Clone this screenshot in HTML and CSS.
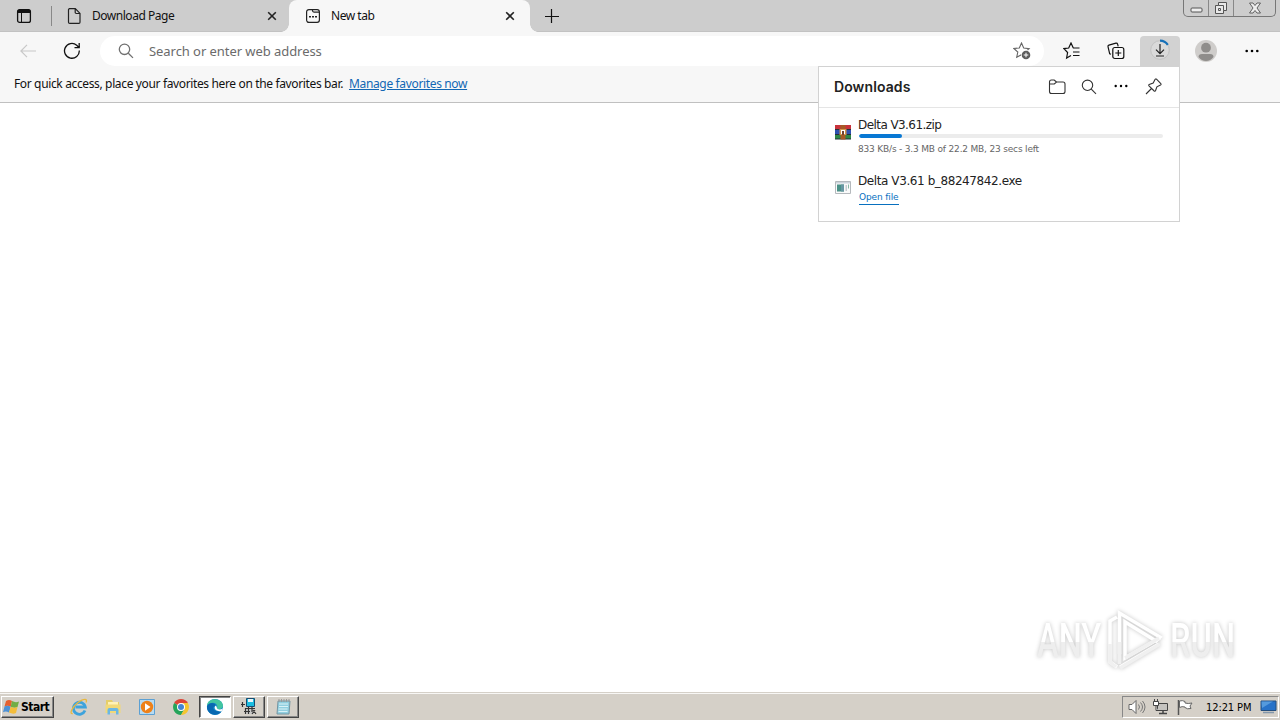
FILE: index.html
```html
<!DOCTYPE html>
<html lang="en">
<head>
  <meta charset="UTF-8" />
  <title>New tab</title>
  <meta name="viewport" content="width=device-width, initial-scale=1" />
  <link rel="stylesheet" href="styles.css">
</head>
<body>
  <header class="tabbar">
    <svg class="tab-actions" width="16" height="16" viewBox="0 0 16 16"><rect x="1.6" y="1.6" width="12.8" height="12.8" rx="2" fill="none" stroke="#111" stroke-width="1.3"/><path d="M1.5 5V3.5a2 2 0 0 1 2-2h9a2 2 0 0 1 2 2V5z" fill="#111"/><path d="M5.5 5v9" stroke="#111"/></svg>
    <span class="tab-divider"></span>
    <div class="tab">
      <svg class="favicon" width="16" height="16" viewBox="0 0 16 16"><path d="M3 .7h6.3L14 5.4v8.8q0 1.1-1.1 1.1H3.8q-1.3 0-1.3-1.1V1.7Q2.5.7 3.5.7M9.2.9v3.4q0 1.2 1.2 1.2h3.4" fill="none" stroke="#222" stroke-width="1.2"/></svg>
      <span class="tab-title">Download Page</span>
      <svg class="tab-close" width="10" height="10" viewBox="0 0 10 10"><path d="M1.2 1.2l7.6 7.6M8.8 1.2L1.2 8.8" stroke="#222" stroke-width="1.6"/></svg>
    </div>
    <div class="tab active">
      <svg class="favicon" width="16" height="16" viewBox="0 0 16 16"><rect x="1.600" y="1.600" width="12.800" height="12.800" rx="2.300" fill="none" stroke="#222" stroke-width="1.200"/><path d="M7.500 1.600v1q0 1.500 1.500 1.500h5.200" fill="none" stroke="#222" stroke-width="1.200"/><path d="M4 8h2v1.600H4zM7 8h2v1.600H7zM10 8h2v1.600h-2z" fill="#222"/></svg>
      <span class="tab-title">New tab</span>
      <svg class="tab-close" width="10" height="10" viewBox="0 0 10 10"><path d="M1.2 1.2l7.6 7.6M8.8 1.2L1.2 8.8" stroke="#222" stroke-width="1.6"/></svg>
    </div>
    <svg class="new-tab" width="14" height="14" viewBox="0 0 14 14"><path d="M6.500 0v14M0 7.500h14" stroke="#111" stroke-width="1.200"/></svg>
    <div class="window-buttons">
      <span class="wb"><svg width="13" height="6" viewBox="0 0 13 6"><rect x="1" y="1" width="11" height="4" rx="1" fill="#eee" stroke="#555"/></svg></span>
      <span class="wb"><svg width="14" height="14" viewBox="0 0 14 14"><path d="M4.500 1.500h8v8h-3v3h-8v-8h3z" fill="#e8e8e8" stroke="#555"/><path d="M4.500 4.500h5v5M4.500 7.500h2v2h-2z" fill="none" stroke="#555"/></svg></span>
      <span class="wb wide"><svg width="14" height="12" viewBox="0 0 14 12"><path d="M1.500 1h3.500l2 2.500L9 1h3.500L9 6l3.500 5H9L7 8.500 5 11H1.500L5 6z" fill="#eee" stroke="#555" stroke-width=".9"/></svg></span>
    </div>
  </header>

  <div class="toolbar">
    <svg class="back" width="16" height="14" viewBox="0 0 16 14"><path d="M7 .8L.9 7 7 13.200M1 7h15" fill="none" stroke="#c8c8c8" stroke-width="1.200"/></svg>
    <svg class="reload" width="18" height="18" viewBox="0 0 18 18"><path d="M16.300 8.500A7.400 7.400 0 1 1 13.700 3.200L16 5.500M16.200 1v4.700h-4.700" fill="none" stroke="#111" stroke-width="1.300"/></svg>
    <div class="address">
      <svg width="16" height="16" viewBox="0 0 16 16"><circle cx="6.500" cy="6.300" r="5.200" fill="none" stroke="#707070" stroke-width="1.300"/><path d="M10.300 10.200l4.700 4.700" stroke="#707070" stroke-width="1.300"/></svg>
      <span class="placeholder">Search or enter web address</span>
      <svg width="18" height="18" viewBox="0 0 18 18"><path d="M8.500 1l2.200 5 5.400.6-3.900 3.700 1.100 5-4.800-2.600-4.800 2.600 1.100-5.300L.9 6.500 6.300 6z" fill="#fff" stroke="#666" stroke-width="1.100"/><circle cx="13" cy="13" r="5" fill="#fff"/><circle cx="13" cy="13" r="4.300" fill="#5c5c5c"/><path d="M13 10.700v4.600M10.700 13h4.600" stroke="#fff"/></svg>
    </div>
    <svg class="favorites" width="18" height="18" viewBox="0 0 18 18"><path d="M10.300 6L8 1 5.700 6 .9 6.600l3.700 3.900L3.600 16 8 13.500M10 6h6.500M10 10h6.500M10 13.500h6.500" fill="none" stroke="#111" stroke-width="1.200"/></svg>
    <svg class="collections" width="18" height="18" viewBox="0 0 18 18"><path d="M4 12.300l-1.300-.5L1 4.600q-.2-1.200.9-1.500l7-1.900q1.300-.3 1.700.9l.6 2.200" fill="none" stroke="#111" stroke-width="1.200"/><rect x="5.800" y="5.500" width="11" height="11" rx="2" fill="none" stroke="#111" stroke-width="1.200"/><path d="M11.300 8v6M8.300 11h6" stroke="#111" stroke-width="1.200"/></svg>
    <div class="download-button">
      <svg width="24" height="24" viewBox="0 0 24 24"><circle cx="12" cy="12" r="9.300" fill="#dadada" stroke="#c2c2c2"/><path d="M12 2.700a9.300 9.300 0 0 1 7.800 4.200" fill="none" stroke="#1670b8" stroke-width="2.200"/><path d="M12 6v9.500M8 11.700l4 4 4-4M8 18h8" fill="none" stroke="#222" stroke-width="1.200"/></svg>
    </div>
    <svg class="avatar" width="22" height="22" viewBox="0 0 22 22"><circle cx="11" cy="11" r="11" fill="#cfcdcb"/><circle cx="11" cy="7.700" r="4.900" fill="#8f8d8b"/><path d="M3.500 17q0-3 3.500-3h8q3.500 0 3.500 3-3 4-7.500 4t-7.500-4z" fill="#8f8d8b"/></svg>
    <svg class="more" width="14" height="4" viewBox="0 0 14 4"><circle cx="1.700" cy="2" r="1.300"/><circle cx="7" cy="2" r="1.300"/><circle cx="12.300" cy="2" r="1.300"/></svg>
  </div>

  <div class="favbar">
    <span class="fav-text">For quick access, place your favorites here on the favorites bar.</span>
    <a class="fav-link">Manage favorites now</a>
  </div>

  <main class="page">
    <div class="watermark">
      <span class="mark-word"><span>ANY</span></span>
      <svg width="60" height="66" viewBox="0 0 60 66">
        <path d="M12 59l-7-5V13l7-4M14.500 46V5L55 29l-4 4-31-19v36l35-20M15 59l39-23" fill="none" stroke="#fff" stroke-width="3.500"/>
        <path d="M5 36v18l6 5M14.500 34v22M20 50l34-20M15 60l40-24" fill="none" stroke="#f0f0f0" stroke-width="3.500"/>
      </svg>
      <span class="mark-word"><span>RUN</span></span>
    </div>
  </main>

  <section class="downloads">
    <div class="downloads-head">
      <h1>Downloads</h1>
      <svg width="18" height="16" viewBox="0 0 18 16"><path d="M1.500 5h4.800l2.200-2H15q2 0 2 2v7.500q0 2-2 2H3.500q-2 0-2-2V3q0-2 2-2h2.700l2.300 2" fill="none" stroke="#333" stroke-width="1.100"/></svg>
      <svg width="16" height="16" viewBox="0 0 16 16"><circle cx="6.500" cy="6.300" r="5.200" fill="none" stroke="#333" stroke-width="1.100"/><path d="M10.300 10.200l4.700 4.700" stroke="#333" stroke-width="1.100"/></svg>
      <svg class="head-more" width="14" height="4" viewBox="0 0 14 4"><circle cx="1.700" cy="2" r="1.200"/><circle cx="7" cy="2" r="1.200"/><circle cx="12.300" cy="2" r="1.200"/></svg>
      <svg width="17" height="17" viewBox="0 0 17 17"><path d="M11.500 1.200l4.300 4.300q.7.900-.3 1.500l-3.600 1.800-1.400 4q-.5.900-1.300.2L4 7.800q-.7-.8.200-1.300l4-1.400L10 1.500q.6-1 1.500-.3zM6.500 10.500L1 16" fill="none" stroke="#333" stroke-width="1.100"/></svg>
    </div>
    <div class="item">
      <svg class="file-icon" width="16" height="16" viewBox="0 0 16 16"><path d="M0 1h16v4.500H0z" fill="#c8323b"/><path d="M0 5.500h16v5H0z" fill="#2e51b0"/><path d="M0 10.500h16V15H0z" fill="#2d8846"/><path d="M0 5h16v1H0zM0 10h16v1H0zM0 14.500h16v1H0z" fill="#26303d"/><path d="M5.500 1h5v14.500h-5z" fill="#a65a26"/><path d="M4.500 5h7v6h-7z" fill="#d4954c"/><path d="M6 6h4v4H6z" fill="#fff"/><path d="M7 7h2v4H7z" fill="#704230"/></svg>
      <div class="item-body">
        <div class="file-name zip-name">Delta V3.61.zip</div>
        <div class="progress"><div class="progress-fill" style="width: 14.2%"></div></div>
        <div class="file-status">833 KB/s - 3.3 MB of 22.2 MB, 23 secs left</div>
      </div>
    </div>
    <div class="item">
      <svg class="file-icon" width="16" height="16" viewBox="0 0 16 16"><path d="M.5 1.500h15v12H.5z" fill="#fafafa" stroke="#b5b9bd"/><path d="M1 2h14v1.500H1z" fill="#ccd4dc"/><path d="M2 4.500h7v7H2z" fill="#4b9187"/><path d="M6 4.500h3v7H6z" fill="#6797a3"/><path d="M10.500 5h1.500v6h-1.500z" fill="#c5cbd0"/><path d="M13 4.500h1v4h-1z" fill="#88b7a6"/></svg>
      <div class="item-body">
        <div class="file-name exe-name">Delta V3.61 b_88247842.exe</div>
        <a class="open-file">Open file</a>
      </div>
    </div>
  </section>

  <footer class="taskbar">
    <button class="start">
      <svg width="17" height="16" viewBox="0 0 17 16"><path d="M3 2q3-2 6 0L7.700 7.700Q4.500 6 1.500 7.500z" fill="#e5602f"/><path d="M9 2q3.500 2 7 .5L14.500 8q-3 1.500-6.800-.3z" fill="#72ad45"/><path d="M1.500 7.500q3-1.500 6.200.2L6 13.500q-3-1.700-6-.3z" fill="#4d91d5"/><path d="M7.700 7.700q3.300 1.800 6.800.3L13 14q-3 1.500-7-.5z" fill="#f3bd3b"/></svg>
      <span>Start</span>
    </button>
    <div class="quick">
      <svg width="18" height="18" viewBox="0 0 18 18"><path d="M15 12.500A6 6 0 1 1 15.300 9H5.500" fill="none" stroke="#3ea3dc" stroke-width="2.800"/><path d="M2.700 15.500C-1 16.500 2 9 8 4.500s10-4 8 0" fill="none" stroke="#e8b83e" stroke-width="1.300"/></svg>
      <svg width="18" height="18" viewBox="0 0 18 18"><path d="M2 2h6l1 2h6v9H2z" fill="#e5ce69"/><path d="M4 4h10v9H4z" fill="#fff2b5"/><path d="M1.500 6.500h15V15h-15z" fill="#f1d978"/><path d="M3.500 16.500V12q0-2 2-2h7q2 0 2 2v4.500h-2.500V13H6v3.500z" fill="#6bb7e3"/></svg>
      <svg width="18" height="18" viewBox="0 0 18 18"><path d="M1.500 1.500h15v15h-15z" fill="#b7dbf2" stroke="#5ca0d3"/><circle cx="9" cy="9" r="6.200" fill="#ee8119"/><path d="M7 5.300v7.400L12.500 9z" fill="#fff"/></svg>
      <svg width="18" height="18" viewBox="0 0 18 18"><path d="M9 9L2.100 5A8 8 0 0 1 15.900 5z" fill="#dc4437"/><path d="M9 9L2.100 5A8 8 0 0 0 9 17l3.500-6z" fill="#25a45a"/><path d="M15.900 5A8 8 0 0 1 9 17l3.500-6L9 5z" fill="#f4c52f"/><circle cx="9" cy="9" r="4" fill="#fff"/><circle cx="9" cy="9" r="3" fill="#4285d4"/></svg>
    </div>
    <div class="task current">
      <svg width="18" height="18" viewBox="0 0 18 18"><circle cx="9" cy="9" r="8" fill="#168bc7"/><path d="M1 8C1-1 16-1 17 7.500c0 4-6 5-6 2.200C13 5 5 2 1 8z" fill="#42c5a0"/><path d="M1 8c2-4 8-4 9-.5-5 1-3 7 5.500 6C10 20 0 16 1 8z" fill="#0868b1"/><path d="M10 7.500c-3 2-1 6 5.500 6l1.500-3c-3 1.500-6 1-6-.5z" fill="#fff"/></svg>
    </div>
    <div class="task">
      <svg width="18" height="18" viewBox="0 0 18 18"><path d="M6.500.5h8v8h-8z" fill="#19bde1" stroke="#174c71"/><path d="M8 1h5v3H8z" fill="#e9f5fa"/><path d="M5 10h9v6H5z" fill="#c9c9c9"/><path d="M2.500 4v5M1 6.500h4M5.500 10v6M8.500 9v7M12 9v5M5 10.500h10M4 13.500h6M13 12l3 4M12 16l3-4" fill="none" stroke="#333" stroke-width="1.200"/></svg>
    </div>
    <div class="task">
      <svg width="18" height="18" viewBox="0 0 18 18"><path d="M4 3h12l-1 13H3z" fill="#91cfe0" stroke="#7595a2"/><path d="M5 6h9M5 8.500h9M4.500 11h9M4.500 13.500h9" stroke="#d9f2f7"/><path d="M5 1v3M7.500 1v3M10 1v3M12.500 1v3M15 1v3" stroke="#999"/></svg>
    </div>
    <div class="tray">
      <svg width="18" height="16" viewBox="0 0 18 16"><path d="M1 5.500h3L8 1.500v13l-4-4H1z" fill="#fff" stroke="#666"/><path d="M10.500 5.500q2 2.500 0 5M12.500 3.500q4 4.500 0 9M14.500 2q5 6 0 12" fill="none" stroke="#777"/></svg>
      <svg width="18" height="16" viewBox="0 0 18 16"><path d="M5.500 4.500h10v7h-10z" fill="#c5c3bf" stroke="#444"/><path d="M7 14.500h8M11 12v2" stroke="#444" stroke-width="1.500"/><path d="M1.500 2.500h5v4h-5zM2.500 0v2M5.500 0v2M4 7v4.500h2" fill="#fff" stroke="#444"/></svg>
      <svg width="18" height="16" viewBox="0 0 18 16"><path d="M2.500 1v15" stroke="#555" stroke-width="1.500"/><path d="M3.500 2q3-1 5.500.500V4q3 1 7 0l-2 3 1 2.500q-4 1-6-1V8Q6 7 3.500 8.500z" fill="#fff" stroke="#666"/></svg>
      <span class="clock">12:21 PM</span>
      <svg width="17" height="14" viewBox="0 0 17 14"><path d="M1 1h15v9.500H1z" fill="#2872c8" stroke="#244e7e"/><path d="M1.500 1.500H13L2 8z" fill="#559add"/><path d="M3 12.500h11" stroke="#8397ab" stroke-width="1.500"/></svg>
    </div>
  </footer>
</body>
</html>
```
FILE: styles.css
```css
* {
  box-sizing: border-box;
}

html, body {
  margin: 0;
  height: 100%;
  overflow: hidden;
}

body {
  display: flex;
  flex-direction: column;
  background: #fff;
  color: #111;
  font-family: "Noto Sans", "Open Sans", sans-serif;
  font-size: 12px;
  position: relative;
}

svg {
  display: block;
  flex: none;
}

.tabbar {
  display: flex;
  align-items: center;
  height: 32px;
  flex: none;
  background: #cdcdcd;
  border-bottom: 1px solid #c2c2c2;
}

.tab-actions {
  margin-left: 16px;
}

.tab-divider {
  width: 1px;
  height: 20px;
  margin-left: 19px;
  background: #888;
}

.tab {
  display: flex;
  align-items: center;
  width: 237px;
  height: 32px;
  padding: 0 12px 0 14px;
}

.tab.active {
  width: 241px;
  margin-top: 1px;
  padding: 0 15px 1px 16px;
  background: #f7f7f7;
  border-radius: 8px 8px 0 0;
  position: relative;
}

.tab.active::before,
.tab.active::after {
  content: "";
  position: absolute;
  bottom: 0;
  left: -8px;
  width: 8px;
  height: 8px;
  background: radial-gradient(circle at 0 0, transparent 7.5px, #f7f7f7 8px);
}

.tab.active::after {
  left: auto;
  right: -8px;
  background: radial-gradient(circle at 100% 0, transparent 7.5px, #f7f7f7 8px);
}

.tab-title {
  flex: 1;
  margin-left: 10px;
  letter-spacing: -0.47px;
  white-space: nowrap;
}

.new-tab {
  margin-left: 15px;
}

.window-buttons {
  display: flex;
  align-self: flex-start;
  height: 17px;
  margin: 0 4px 0 auto;
  border: 1px solid #777;
  border-top: 0;
  border-radius: 0 0 5px 5px;
}

.wb {
  display: flex;
  justify-content: center;
  align-items: center;
  width: 25px;
}

.wb:first-child {
  width: 24px;
  padding-top: 4px;
}

.wb + .wb {
  border-left: 1px solid #888;
}

.wb.wide {
  width: 42px;
}

.toolbar {
  display: flex;
  align-items: center;
  height: 35px;
  flex: none;
  padding-top: 3px;
  background: #f7f7f7;
}

.back {
  margin-left: 20px;
}

.reload {
  margin-left: 27px;
}

.address {
  display: flex;
  align-items: center;
  width: 944px;
  height: 30px;
  margin-left: 19px;
  padding: 0 13px 0 18px;
  background: #fff;
  border-radius: 15px;
}

.placeholder {
  flex: 1;
  margin-left: 15px;
  color: #6b6b6b;
  font-size: 13px;
  letter-spacing: -0.06px;
}

.favorites {
  margin-left: 19px;
}

.collections {
  margin-left: 26px;
}

.download-button {
  display: flex;
  justify-content: center;
  align-items: center;
  width: 40px;
  height: 31px;
  margin-left: 15px;
  padding-bottom: 2px;
  background: #d2d2d2;
  border-radius: 4px 4px 0 0;
}

.avatar {
  margin-left: 15px;
}

.more {
  margin-left: 28px;
}

.favbar {
  display: flex;
  align-items: center;
  height: 36px;
  flex: none;
  padding: 0 0 2px 14px;
  background: #f7f7f7;
  border-bottom: 1px solid #c0c0c0;
  white-space: nowrap;
}

.fav-text {
  letter-spacing: -0.36px;
}

.fav-link {
  margin-left: 6px;
  color: #1267b4;
  letter-spacing: -0.35px;
  text-decoration: underline;
}

.page {
  display: flex;
  justify-content: flex-end;
  align-items: flex-end;
  flex: 1;
  padding: 0 47px 18px 0;
}

.watermark {
  display: flex;
  align-items: center;
  gap: 5px;
  font-family: Roboto, sans-serif;
  font-size: 48px;
  line-height: 66px;
  filter: drop-shadow(0 0 2px #c4c4c4);
}

.mark-word {
  width: 63px;
}

.mark-word span {
  display: inline-block;
  background: linear-gradient(#fff 52%, #eee 52%);
  background-clip: text;
  -webkit-background-clip: text;
  color: transparent;
  font-weight: 500;
  transform: scaleX(.68);
  transform-origin: left;
}

.downloads {
  position: absolute;
  top: 66px;
  left: 818px;
  width: 362px;
  height: 156px;
  background: #fff;
  border: 1px solid #d2d2d2;
  font-family: "DejaVu Sans", sans-serif;
}

.downloads-head {
  display: flex;
  align-items: center;
  gap: 15px;
  height: 41px;
  padding: 0 17px 1px 15px;
  border-bottom: 1px solid #e5e5e5;
}

.downloads-head h1 {
  flex: 1;
  margin: 0;
  color: #222;
  font-family: Inter, sans-serif;
  font-size: 14px;
  font-weight: 600;
  letter-spacing: 0.1px;
}

.head-more {
  margin: 0 2px 1px;
}

.item {
  display: flex;
  height: 56px;
  padding: 9px 16px 0;
}

.file-icon {
  margin-top: 7px;
}

.item-body {
  flex: 1;
  margin-left: 7px;
}

.file-name {
  color: #222;
  font-size: 12px;
  line-height: 16px;
  white-space: nowrap;
}

.zip-name {
  letter-spacing: -0.57px;
}

.exe-name {
  letter-spacing: -0.41px;
}

.progress {
  height: 4px;
  margin: 1px 0 0 1px;
  overflow: hidden;
  background: #ececec;
  border-radius: 2px;
}

.progress-fill {
  height: 4px;
  background: #0878d4;
  border-radius: 2px;
}

.file-status {
  margin-top: 3px;
  color: #666;
  font-size: 9px;
  letter-spacing: -0.18px;
  line-height: 16px;
}

.open-file {
  display: inline-block;
  margin-left: 1px;
  padding-top: 1px;
  color: #0870bf;
  font-size: 9px;
  letter-spacing: -0.12px;
  line-height: 14px;
  border-bottom: 1px solid #0870bf;
  vertical-align: top;
}

.taskbar {
  display: flex;
  align-items: center;
  height: 28px;
  flex: none;
  padding: 1px 1px 0;
  background: #d5d0c8;
  border-top: 1px solid #d5d0c8;
  box-shadow: inset 0 1px #f8f7f5;
  font-family: "DejaVu Sans", sans-serif;
}

.start {
  display: flex;
  align-items: center;
  gap: 1px;
  width: 53px;
  height: 22px;
  padding: 0 1px;
  background: #d5d0c8;
  border: 1px solid;
  border-color: #fff #444 #444 #fff;
  box-shadow: inset -1px -1px #888;
  color: #000;
  font-family: "DejaVu Sans Condensed", "DejaVu Sans", sans-serif;
  font-size: 12px;
  font-weight: 700;
  letter-spacing: -0.5px;
}

.quick {
  display: flex;
  gap: 16px;
  margin: 0 9px 0 16px;
}

.task {
  display: flex;
  align-items: center;
  justify-content: center;
  width: 32px;
  height: 22px;
  margin-right: 2px;
  border: 1px solid;
  border-color: #fff #444 #444 #fff;
  box-shadow: inset -1px -1px #888;
}

.task.current {
  background: #fff;
  border-color: #444 #fff #fff #444;
  box-shadow: inset 1px 1px #888;
}

.tray {
  display: flex;
  align-items: center;
  gap: 6px;
  width: 157px;
  height: 22px;
  margin-left: auto;
  padding: 0 1px 0 5px;
  border: 1px solid;
  border-color: #888 #fff #fff #888;
}

.clock {
  flex: 1;
  margin-left: 6px;
  color: #000;
  font-family: "DejaVu Sans Condensed", sans-serif;
  font-size: 11px;
  letter-spacing: -0.1px;
  white-space: nowrap;
}
```
